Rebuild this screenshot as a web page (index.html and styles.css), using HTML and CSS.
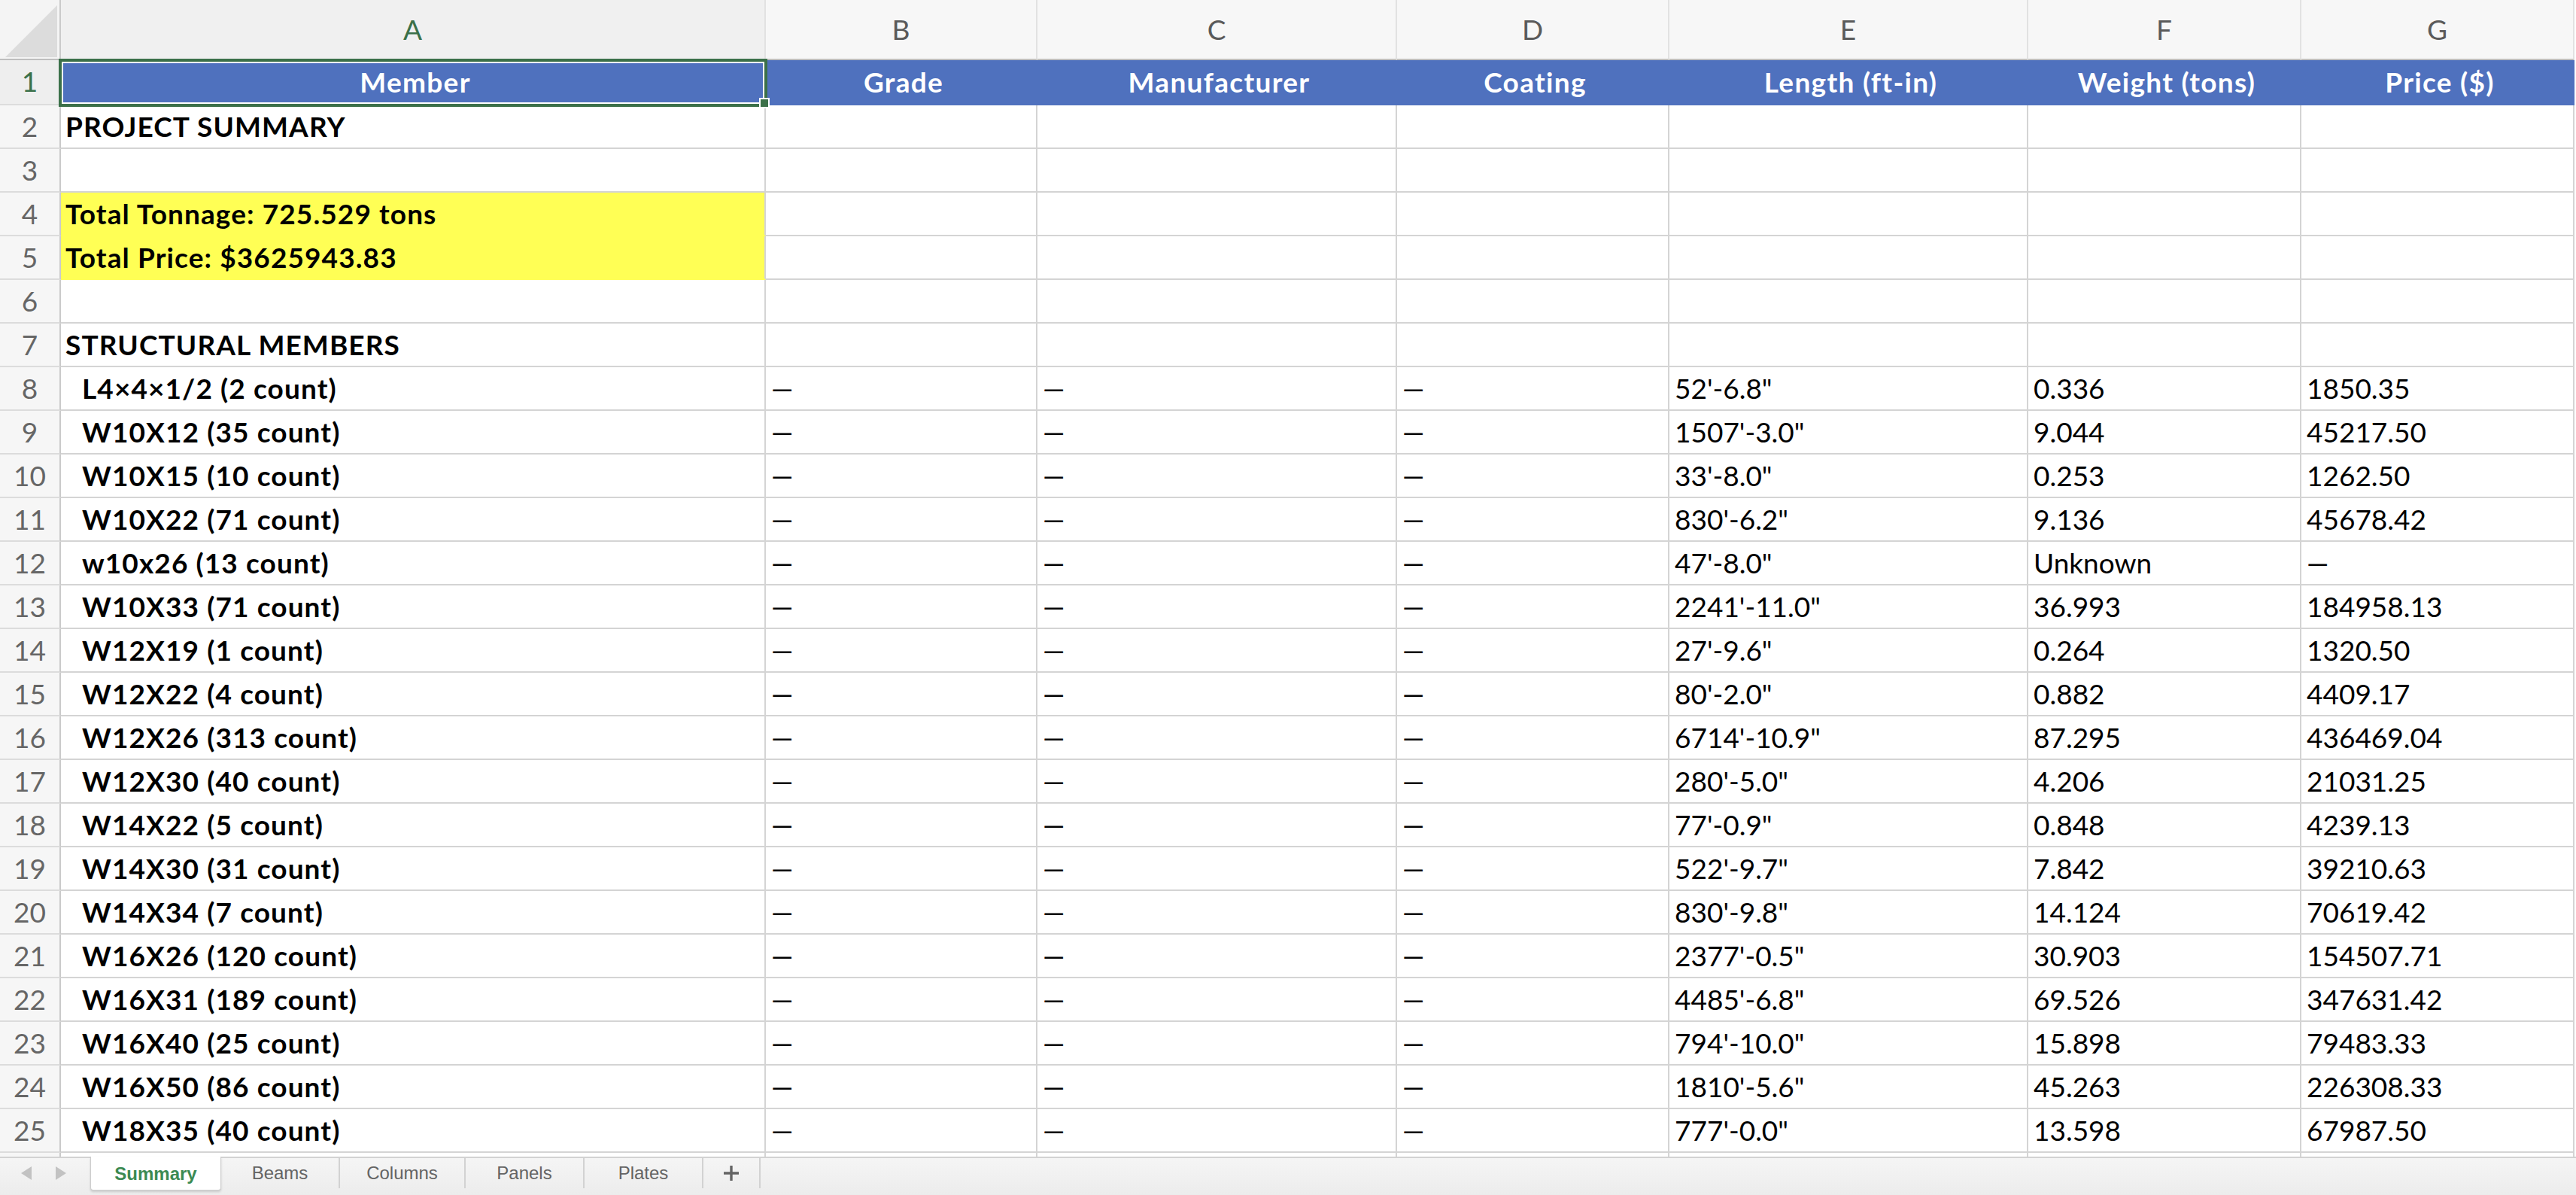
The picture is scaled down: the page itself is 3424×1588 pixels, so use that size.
FILE: index.html
```html
<!DOCTYPE html>
<html lang="en">
<head>
    <meta charset="UTF-8">
    <title>Summary</title>
    <link rel="stylesheet" href="styles.css">
</head>
<body>
    <div class="sheet">
        <div class="grid" id="grid">
            <!-- column letters -->
            <div class="corner"><div class="corner-tri"></div></div>
            <div class="col-head active">A</div>
            <div class="col-head">B</div>
            <div class="col-head">C</div>
            <div class="col-head">D</div>
            <div class="col-head">E</div>
            <div class="col-head">F</div>
            <div class="col-head">G</div>

            <!-- row 1: header row -->
            <div class="row-head active">1</div>
            <div class="cell title selected">Member<span class="handle"></span></div>
            <div class="cell title">Grade</div>
            <div class="cell title">Manufacturer</div>
            <div class="cell title">Coating</div>
            <div class="cell title">Length (ft-in)</div>
            <div class="cell title">Weight (tons)</div>
            <div class="cell title">Price ($)</div>
        </div>

        <div class="tabs">
            <div class="tab-nav">
                <span class="arrow left"></span>
                <span class="arrow right"></span>
            </div>
            <div class="tab active">Summary</div>
            <div class="tab w-158">Beams</div>
            <div class="tab w-167">Columns</div>
            <div class="tab w-158">Panels</div>
            <div class="tab w-158">Plates</div>
            <div class="tab add">
                <svg width="22" height="22" viewBox="0 0 22 22"><path d="M11 1v20M1 11h20" stroke="#646464" stroke-width="3.4"/></svg>
            </div>
        </div>
    </div>

    <script>
        const grid = document.getElementById('grid');

        // summary block, column A only
        const summaryRows = [
            ['PROJECT SUMMARY', 'bold'],
            ['', ''],
            ['Total Tonnage: 725.529 tons', 'bold yellow'],
            ['Total Price: $3625943.83', 'bold yellow'],
            ['', ''],
            ['STRUCTURAL MEMBERS', 'bold']
        ];

        // member, length, weight, price
        const members = [
            ['L4×4×1/2 (2 count)', '52\'-6.8"', '0.336', '1850.35'],
            ['W10X12 (35 count)', '1507\'-3.0"', '9.044', '45217.50'],
            ['W10X15 (10 count)', '33\'-8.0"', '0.253', '1262.50'],
            ['W10X22 (71 count)', '830\'-6.2"', '9.136', '45678.42'],
            ['w10x26 (13 count)', '47\'-8.0"', 'Unknown', '—'],
            ['W10X33 (71 count)', '2241\'-11.0"', '36.993', '184958.13'],
            ['W12X19 (1 count)', '27\'-9.6"', '0.264', '1320.50'],
            ['W12X22 (4 count)', '80\'-2.0"', '0.882', '4409.17'],
            ['W12X26 (313 count)', '6714\'-10.9"', '87.295', '436469.04'],
            ['W12X30 (40 count)', '280\'-5.0"', '4.206', '21031.25'],
            ['W14X22 (5 count)', '77\'-0.9"', '0.848', '4239.13'],
            ['W14X30 (31 count)', '522\'-9.7"', '7.842', '39210.63'],
            ['W14X34 (7 count)', '830\'-9.8"', '14.124', '70619.42'],
            ['W16X26 (120 count)', '2377\'-0.5"', '30.903', '154507.71'],
            ['W16X31 (189 count)', '4485\'-6.8"', '69.526', '347631.42'],
            ['W16X40 (25 count)', '794\'-10.0"', '15.898', '79483.33'],
            ['W16X50 (86 count)', '1810\'-5.6"', '45.263', '226308.33'],
            ['W18X35 (40 count)', '777\'-0.0"', '13.598', '67987.50']
        ];

        function addCell(text, cls) {
            const div = document.createElement('div');
            div.className = cls;
            div.textContent = text;
            grid.appendChild(div);
        }

        function addRow(num, cells, firstCls) {
            addCell(num, 'row-head');
            cells.forEach((text, i) => {
                addCell(text, i === 0 && firstCls ? 'cell ' + firstCls : 'cell');
            });
        }

        let rowNum = 2;
        summaryRows.forEach(([text, cls]) => {
            addRow(rowNum++, [text, '', '', '', '', '', ''], cls);
        });

        members.forEach(([name, len, weight, price]) => {
            addRow(rowNum++, [name, '—', '—', '—', len, weight, price], 'bold indent');
        });

        // row 26 is cut off by the tab bar, its number doesn't show
        addRow('', ['', '', '', '', '', '', '']);
    </script>
</body>
</html>
```

FILE: styles.css
```css
* {
    box-sizing: border-box;
    margin: 0;
    padding: 0;
}

body {
    width: 3424px;
    height: 1588px;
    overflow: hidden;
    background: #fff;
    font-family: 'Lato', 'Open Sans', sans-serif;
}

.sheet {
    display: flex;
    flex-direction: column;
    height: 1588px;
}

.grid {
    display: grid;
    grid-template-columns: 81px 937px 361px 478px 362px 477px 363px 363px;
    grid-template-rows: 80px 60px;
    grid-auto-rows: 58px;
    width: 3422px;
    height: 1537px;
    overflow: hidden;
    flex: none;
    font-size: 37px;
}

/* header strip */
.corner {
    background: #f4f4f4;
    border-right: 2px solid #cacaca;
    border-bottom: 2px solid #bebebe;
    padding: 7px 3px 2px 7px;
}

.corner-tri {
    width: 69px;
    height: 69px;
    background: #dcdcdc;
    clip-path: polygon(100% 0, 100% 100%, 0 100%);
}

.col-head {
    background: #f7f7f7;
    border-right: 2px solid #e2e2e2;
    border-bottom: 2px solid #bebebe;
    text-align: center;
    line-height: 78px;
    color: #5a5a5a;
}

.col-head.active { background: #f0f0f0; color: #3b7049; }

.row-head {
    background: #f6f6f6;
    border-right: 2px solid #cacaca;
    border-bottom: 2px solid #dcdcdc;
    text-align: center;
    line-height: 56px;
    color: #666;
}

.row-head.active { background: #eeeeee; color: #3b7049; }

/* cells */
.cell {
    border-right: 2px solid #d4d4d4;
    border-bottom: 2px solid #d4d4d4;
    padding-left: 7px;
    line-height: 56px;
    white-space: nowrap;
    overflow: hidden;
    color: #000;
}

.bold {
    font-weight: 700;
    letter-spacing: 1.1px;
    padding-left: 6px;
}

.indent { padding-left: 28px; }

.yellow {
    background: #ffff55;
    border-bottom-color: #ffff55;
}

.title {
    background: #4f71be;
    border-color: #4f71be;
    color: #fff;
    font-weight: 700;
    letter-spacing: 1.3px;
    text-align: center;
    line-height: 58px;
}

/* selected cell A1 */
.selected {
    position: relative;
    overflow: visible;
}

.selected::after {
    content: '';
    position: absolute;
    left: -3px;
    top: -2px;
    right: -4px;
    bottom: -4px;
    border: 4px solid #3b7049;
    box-shadow: inset 0 0 0 2px #fff;
}

.handle {
    position: absolute;
    right: -7px;
    bottom: -6px;
    width: 14px;
    height: 14px;
    background: #3b7049;
    border: 2px solid #fff;
    z-index: 2;
}

/* sheet tabs */
.tabs {
    flex: 1;
    display: flex;
    align-items: flex-start;
    background: linear-gradient(#f5f5f5, #ececec);
    border-top: 2px solid #d2d2d2;
    font-family: 'Liberation Sans', Arial, sans-serif;
    font-size: 24px;
    color: #646464;
}

.tab-nav {
    width: 120px;
    height: 40px;
    display: flex;
    align-items: center;
    gap: 32px;
    padding-left: 28px;
}

.arrow {
    width: 0;
    height: 0;
    border-top: 9px solid transparent;
    border-bottom: 9px solid transparent;
}

.arrow.left { border-right: 14px solid #c2c2c2; }
.arrow.right { border-left: 14px solid #c2c2c2; }

.tab {
    height: 40px;
    display: flex;
    align-items: center;
    justify-content: center;
    border-right: 2px solid #d2d2d2;
}

.tab.active {
    width: 174px;
    height: 45px;
    margin-top: -2px;
    padding-top: 2px;
    background: #fff;
    color: #3c8a52;
    font-weight: 700;
    border: 1px solid #cdcdcd;
    border-top: none;
    border-radius: 0 0 4px 4px;
    box-shadow: 0 2px 3px rgba(0, 0, 0, 0.15);
}

.w-158 { width: 158px; }
.w-167 { width: 167px; }
.add { width: 76px; }
```
